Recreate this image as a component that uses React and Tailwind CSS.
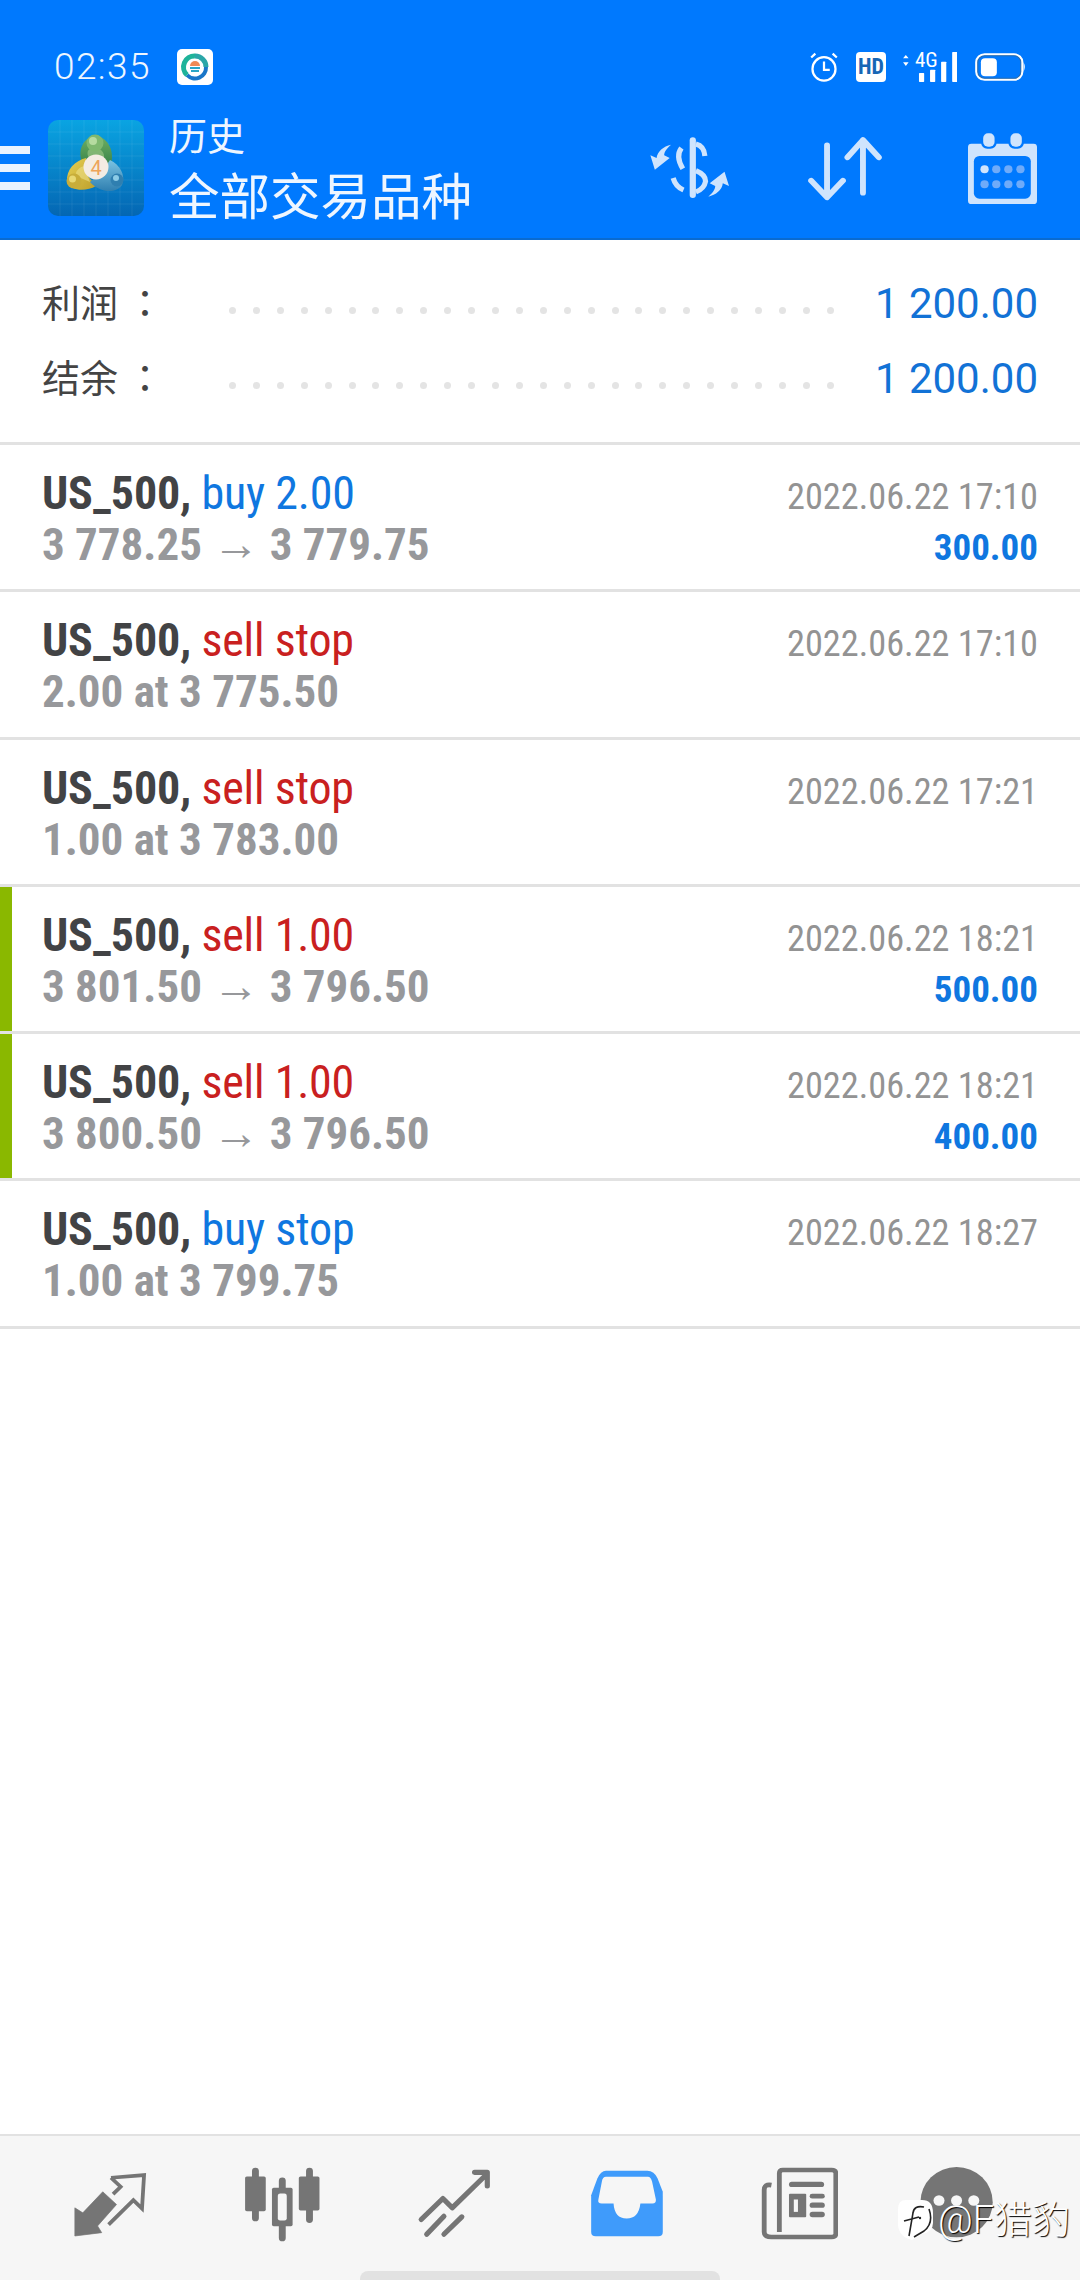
import React from 'react';

const cond = "font-['Roboto','Liberation_Sans',sans-serif] [font-stretch:75%]";

const trades = [
    { title: 'buy 2.00', tone: 'text-[#0f77e0]', sub: ['3 778.25', '3 779.75'], date: '2022.06.22 17:10', profit: '300.00' },
    { title: 'sell stop', tone: 'text-[#c92020]', subText: '2.00 at 3 775.50', date: '2022.06.22 17:10' },
    { title: 'sell stop', tone: 'text-[#c92020]', subText: '1.00 at 3 783.00', date: '2022.06.22 17:21' },
    { title: 'sell 1.00', tone: 'text-[#c92020]', sub: ['3 801.50', '3 796.50'], date: '2022.06.22 18:21', profit: '500.00', mark: true },
    { title: 'sell 1.00', tone: 'text-[#c92020]', sub: ['3 800.50', '3 796.50'], date: '2022.06.22 18:21', profit: '400.00', mark: true },
    { title: 'buy stop', tone: 'text-[#0f77e0]', subText: '1.00 at 3 799.75', date: '2022.06.22 18:27' },
];

const StatusIcons = () => (
    <div className="flex items-center">
        <svg width="32" height="32" viewBox="775 150 100 98" preserveAspectRatio="none">
            <circle cx="825" cy="205" r="36" fill="none" stroke="#fff" strokeWidth="7" />
            <path d="M825 182V208H843" fill="none" stroke="#fff" strokeWidth="7" />
            <path d="M785 170L798 158M865 170L852 158" stroke="#fff" strokeWidth="7" />
        </svg>
        <div className="w-[30px] h-[30px] ml-[16px] bg-white rounded-[4px] flex items-center justify-center text-[#1766b5] text-[22px] font-bold leading-none font-['Roboto',sans-serif] [font-stretch:75%]">
            HD
        </div>
        <div className="relative w-[56px] h-[30px] ml-[15px]">
            <svg width="56" height="30" viewBox="1048 153 162 90" preserveAspectRatio="none" className="block">
                <path d="M1054 172L1062 162L1070 172ZM1054 184L1062 195L1070 184Z" fill="#fff" />
                <rect x="1100" y="216" width="15" height="27" rx="2" fill="#fff" />
                <rect x="1132" y="206" width="15" height="37" rx="2" fill="#fff" />
                <rect x="1164" y="182" width="15" height="61" rx="2" fill="#fff" />
                <rect x="1196" y="153" width="15" height="90" rx="2" fill="#fff" />
            </svg>
            <span className="absolute left-[14px] top-[-3px] text-white text-[21px] leading-[22px] font-['Roboto',sans-serif] [font-stretch:75%]">4G</span>
        </div>
        <svg width="51" height="28" viewBox="1265 156 147 84" preserveAspectRatio="none" className="ml-[18px]">
            <rect x="1269" y="160" width="132" height="76" rx="24" fill="none" stroke="#fff" strokeWidth="7" />
            <rect x="1273" y="164" width="124" height="68" rx="20" fill="none" stroke="#2d6cab" strokeWidth="3" />
            <rect x="1282" y="172" width="46" height="54" rx="12" fill="#fff" />
            <path d="M1405 184Q1412 198 1405 212Z" fill="#fff" />
        </svg>
    </div>
);

const AppLogo = () => (
    <svg width="96" height="96" viewBox="0 0 96 96" className="shrink-0">
        <defs>
            <linearGradient id="mt" x1="0" y1="0" x2="0" y2="1">
                <stop offset="0" stopColor="#0aa4e2" />
                <stop offset="1" stopColor="#0466b3" />
            </linearGradient>
            <linearGradient id="mtGreen" x1="0" y1="0" x2="0" y2="1">
                <stop offset="0" stopColor="#6fae62" />
                <stop offset="1" stopColor="#2f7d46" />
            </linearGradient>
            <linearGradient id="mtGold" x1="0" y1="0" x2="1" y2="1">
                <stop offset="0" stopColor="#e6cf52" />
                <stop offset="1" stopColor="#bd9f2c" />
            </linearGradient>
            <linearGradient id="mtBlue" x1="0" y1="0" x2="0" y2="1">
                <stop offset="0" stopColor="#7cc3e2" />
                <stop offset="1" stopColor="#2f7fb0" />
            </linearGradient>
        </defs>
        <rect width="96" height="96" rx="10" fill="url(#mt)" />
        <path d="M12 0V96M24 0V96M36 0V96M48 0V96M60 0V96M72 0V96M84 0V96M0 12H96M0 24H96M0 36H96M0 48H96M0 60H96M0 72H96M0 84H96" stroke="#ffffff" strokeOpacity="0.07" strokeWidth="1" />
        <path d="M34 42C29 30 36 17 47 16C58 16 67 29 63 44L56 50H40Z" fill="url(#mtGreen)" />
        <path d="M40 36C38 30 42 28 47 28C52 28 57 32 56 38L50 42Z" fill="#a9d08e" fillOpacity="0.55" />
        <circle cx="47" cy="23" r="8.5" fill="#7fb86f" />
        <circle cx="45" cy="21" r="4" fill="#b6dba0" />
        <path d="M38 38C27 41 18 49 19 62C22 71 38 72 48 66L40 56Z" fill="url(#mtGold)" />
        <path d="M36 46C30 48 27 52 28 56L42 62Z" fill="#f1e38e" fillOpacity="0.55" />
        <circle cx="26" cy="61" r="7.5" fill="#c8ad3a" />
        <circle cx="24.5" cy="59" r="3.5" fill="#e8d873" />
        <path d="M62 40C72 45 78 55 74 65C68 74 52 73 42 62L54 52Z" fill="url(#mtBlue)" />
        <circle cx="69" cy="60" r="6.5" fill="#2f7fb0" />
        <circle cx="68" cy="58" r="3" fill="#8ccbe6" />
        <circle cx="48" cy="47" r="12.5" fill="#f4ece3" />
        <text x="48" y="54.5" textAnchor="middle" fontSize="20" fill="#eda45a" fontFamily="Roboto, sans-serif">4</text>
    </svg>
);

const DollarIcon = () => (
    <svg width="80" height="68" viewBox="318 398 232 204" preserveAspectRatio="none">
        <rect x="436" y="408" width="18" height="182" rx="9" fill="#cfe4fd" />
        <g fill="none" stroke="#cfe4fd" strokeWidth="15">
            <path d="M454 428Q478 434 480 464" />
            <path d="M412 440Q394 465 416 502" />
            <path d="M454 508Q482 520 482 540Q478 562 454 572" />
            <path d="M388 530Q395 556 418 566" />
        </g>
        <path d="M382 430C365 445 362 455 362 462L378 470L335 505L322 462L340 470C342 450 360 435 382 430Z" fill="#cfe4fd" />
        <path d="M490 586C507 571 510 561 510 554L494 546L537 511L550 554L532 546C530 566 512 581 490 586Z" fill="#cfe4fd" />
    </svg>
);

const SortIcon = () => (
    <svg width="76" height="68" viewBox="778 398 220 204" preserveAspectRatio="none">
        <path d="M836 432V588M790 538L836 588L882 538M940 574V416M895 468L940 416L986 468" fill="none" stroke="#cfe4fd" strokeWidth="17" strokeLinecap="round" strokeLinejoin="round" />
    </svg>
);

const CalendarIcon = () => (
    <svg width="69" height="72" viewBox="1243 390 200 216" preserveAspectRatio="none">
        <rect x="1243" y="425" width="200" height="181" rx="10" fill="#cfe4fd" />
        <rect x="1260" y="462" width="165" height="128" rx="16" fill="#0079fe" />
        <rect x="1281" y="388" width="45" height="52" rx="18" fill="#0079fe" />
        <rect x="1360" y="388" width="45" height="52" rx="18" fill="#0079fe" />
        <rect x="1287" y="394" width="33" height="40" rx="14" fill="#cfe4fd" />
        <rect x="1366" y="394" width="33" height="40" rx="14" fill="#cfe4fd" />
        <circle cx="1291" cy="502" r="12" fill="#cfe4fd" />
        {[1325, 1360, 1395].map((x) => <circle key={x} cx={x} cy="502" r="12" fill="#6fabf9" />)}
        {[1291, 1325, 1360, 1395].map((x) => <circle key={x} cx={x} cy="547" r="12" fill="#6fabf9" />)}
    </svg>
);

const NavIcon = ({ left, width, children }) => (
    <svg width={width / 2.904} height="77" viewBox={`${left} 140 ${width} 230`} preserveAspectRatio="none">
        {children}
    </svg>
);

const BottomNav = () => (
    <div className="h-[146px] bg-[#f6f6f6] border-t-[2px] border-[#e2e2e2] flex flex-col">
        <div className="h-[135px] px-[24px] flex items-center">
            <div className="flex-1 flex justify-center">
                <NavIcon left={200} width={240}>
                    <path d="M322 178L418 170L412 270L387 245L315 318M322 178L350 205L328 227" fill="none" stroke="#757575" strokeWidth="11" />
                    <path d="M298 220L338 258L283 322L295 342L217 352V268L240 283Z" fill="#757575" stroke="#757575" strokeWidth="2" strokeLinejoin="round" />
                </NavIcon>
            </div>
            <div className="flex-1 flex justify-center">
                <NavIcon left={700} width={235}>
                    <rect x="729" y="148" width="20" height="160" rx="10" fill="#757575" />
                    <rect x="709" y="174" width="60" height="104" rx="5" fill="#757575" />
                    <rect x="807" y="177" width="20" height="191" rx="10" fill="#757575" />
                    <rect x="787" y="208" width="60" height="115" rx="5" fill="#757575" />
                    <rect x="804" y="225" width="26" height="81" rx="7" fill="#f6f6f6" />
                    <rect x="886" y="148" width="20" height="165" rx="10" fill="#757575" />
                    <rect x="865" y="174" width="60" height="102" rx="5" fill="#757575" />
                </NavIcon>
            </div>
            <div className="flex-1 flex justify-center">
                <NavIcon left={1202} width={225}>
                    <path d="M1220 303L1283 240L1310 268L1408 170M1375 162H1412V203M1236 347L1286 293M1286 347L1338 295" fill="none" stroke="#757575" strokeWidth="15" strokeLinecap="round" strokeLinejoin="round" />
                </NavIcon>
            </div>
            <div className="flex-1 flex justify-center">
                <NavIcon left={132} width={230}>
                    <path d="M190 157H310Q330 157 340 180L355 220V340Q355 353 342 353H160Q147 353 147 340V230L165 180Q175 157 190 157Z" fill="#3f9bfb" />
                    <path d="M190 175H312Q320 175 324 190L335 243Q336 255 325 255H290Q285 300 250 300Q215 300 212 255H178Q165 255 168 243L178 190Q180 175 190 175Z" fill="#f6f6f6" />
                </NavIcon>
            </div>
            <div className="flex-1 flex justify-center">
                <NavIcon left={636} width={234}>
                    <path d="M675 200Q654 196 654 215V340Q654 355 675 355H850Q862 355 862 345V165Q862 155 850 155H708Q698 155 698 165V340" fill="none" stroke="#757575" strokeWidth="14" />
                    <rect x="726" y="190" width="102" height="16" rx="8" fill="#757575" />
                    <rect x="726" y="226" width="50" height="70" rx="3" fill="#757575" />
                    <rect x="740" y="243" width="12" height="37" fill="#f6f6f6" />
                    <rect x="786" y="226" width="44" height="14" rx="7" fill="#757575" />
                    <rect x="786" y="252" width="44" height="16" rx="8" fill="#757575" />
                    <rect x="786" y="280" width="44" height="16" rx="8" fill="#757575" />
                </NavIcon>
            </div>
            <div className="flex-1 flex justify-center">
                <NavIcon left={1100} width={300}>
                    <circle cx="1212" cy="251" r="105" fill="#757575" />
                    <circle cx="1161" cy="246" r="16" fill="#f6f6f6" />
                    <circle cx="1212" cy="246" r="16" fill="#f6f6f6" />
                    <circle cx="1262" cy="246" r="16" fill="#f6f6f6" />
                </NavIcon>
            </div>
        </div>
        <div className="w-[360px] h-[9px] mx-auto bg-[#e2e2e2] rounded-t-[8px]" />
    </div>
);

const Watermark = () => (
    <div className="absolute left-[897px] top-[2198px] flex items-center">
        <svg width="36" height="42" viewBox="0 0 36 42">
            <path d="M9 1H25Q36 1 36 14V24Q36 33 25 35L15 41Q2 38 1 26V10Q1 1 9 1Z" fill="#ffffff" />
            <path d="M27 8Q17 6 16 14L12 37M7 22L22 18" fill="none" stroke="#222" strokeWidth="1.6" />
            <path d="M32 10Q37 24 27 32L17 38" fill="none" stroke="#222" strokeWidth="1.6" />
            <circle cx="23" cy="19" r="1.2" fill="#222" />
        </svg>
        <span className="ml-[5px] text-white text-[38px] font-light leading-[44px] font-['Roboto','Noto_Sans_CJK_SC',sans-serif] [text-shadow:1px_1px_1px_#000]">
            @F猎豹
        </span>
    </div>
);

const TradeRow = ({ trade }) => (
    <div className="h-[147.3px] flex border-b-[3px] border-[#e2e2e2]">
        <div className={`w-[12px] shrink-0 ${trade.mark ? 'bg-[#8ab800]' : ''}`} />
        <div className={`flex-1 pl-[30px] pr-[42px] flex justify-between ${cond}`}>
            <div className="pt-[24px]">
                <div className="text-[46px] leading-[48px] tracking-[-0.2px] whitespace-nowrap">
                    <span className="font-bold text-[#424345]">US_500, </span>
                    <span className={trade.tone}>{trade.title}</span>
                </div>
                <div className="mt-[4px] text-[45px] leading-[48px] font-bold text-[#97989b] whitespace-nowrap">
                    {trade.sub ? (
                        <>
                            {trade.sub[0]} <span className="font-normal text-[47px] leading-[40px]">→</span> {trade.sub[1]}
                        </>
                    ) : trade.subText}
                </div>
            </div>
            <div className="pt-[29px] text-right">
                <div className="text-[36.3px] leading-[46px] text-[#939393] whitespace-nowrap">{trade.date}</div>
                {trade.profit && <div className="mt-[6px] text-[37px] leading-[44px] font-bold text-[#0f77e0]">{trade.profit}</div>}
            </div>
        </div>
    </div>
);

const SummaryRow = ({ label, value }) => (
    <div className="flex items-center h-[75px]">
        <div className="w-[187px] shrink-0 flex items-center text-[38px] text-[#444] leading-[50px] mt-[-5px]">
            <span className="font-['Noto_Sans_CJK_SC',sans-serif]">{label}</span>
            <span className="ml-[8px] font-['Noto_Sans_CJK_TC',sans-serif]">：</span>
        </div>
        <div className="w-[605px] shrink-0 flex justify-between mt-[14px]">
            {Array.from({ length: 26 }).map((_, i) => (
                <div key={i} className="w-[7px] h-[7px] rounded-full bg-[#e4e4e4]" />
            ))}
        </div>
        <span className="ml-auto text-[42px] text-[#1272d6] font-['Roboto',sans-serif] leading-[50px]">{value}</span>
    </div>
);

export default function App() {
    return (
        <div className="relative w-[1080px] h-[2280px] bg-white flex flex-col overflow-hidden">
            <div className="bg-[#0079fe] border-b-[2px] border-[#0a6bd0] h-[240px] text-white">
                <div className="h-[112px] pt-[22px] pl-[54px] pr-[54px] flex items-center justify-between">
                    <div className="flex items-center">
                        <span className="text-[37px] [font-weight:350] tracking-[1.4px] text-[#eef6ff] font-['Roboto',sans-serif]">02:35</span>
                        <div className="ml-[26px] w-[36px] h-[36px] rounded-[5px] bg-white flex items-center justify-center">
                            <svg width="30" height="30" viewBox="0 0 30 30">
                                <path d="M15 4A11 11 0 0 1 26 15" fill="none" stroke="#2ba6a8" strokeWidth="5" />
                                <path d="M26 15A11 11 0 0 1 7 23" fill="none" stroke="#1976c8" strokeWidth="4" />
                                <path d="M7 23A11 11 0 0 1 15 4" fill="none" stroke="#1eb39a" strokeWidth="5" />
                                <path d="M10 14A5 5 0 0 1 20 14Z" fill="#ef8a55" />
                                <path d="M10 16H20M11 19H19" stroke="#2aa6c6" strokeWidth="2" />
                            </svg>
                        </div>
                    </div>
                    <StatusIcons />
                </div>
                <div className="h-[126px] pb-[14px] flex items-center">
                    <div className="w-[30px] shrink-0 flex flex-col gap-[10px]">
                        <div className="h-[8px] bg-[#e9f3ff]" />
                        <div className="h-[8px] bg-[#e9f3ff]" />
                        <div className="h-[8px] bg-[#e9f3ff]" />
                    </div>
                    <div className="ml-[18px]"><AppLogo /></div>
                    <div className="ml-[25px] mt-[-4px] text-[#eef6ff] font-['Noto_Sans_CJK_SC',sans-serif] whitespace-nowrap">
                        <div className="text-[38px] leading-[40px]">历史</div>
                        <div className="mt-[14px] text-[50.5px] leading-[50px]">全部交易品种</div>
                    </div>
                    <div className="ml-auto pr-[43px] flex items-center">
                        <DollarIcon />
                        <div className="ml-[78px]"><SortIcon /></div>
                        <div className="ml-[85px]"><CalendarIcon /></div>
                    </div>
                </div>
            </div>

            <div className="h-[205px] px-[42px] pt-[26px] border-b-[3px] border-[#e2e2e2]">
                <SummaryRow label="利润" value="1 200.00" />
                <SummaryRow label="结余" value="1 200.00" />
            </div>

            {trades.map((trade, i) => <TradeRow key={i} trade={trade} />)}

            <div className="flex-1" />
            <BottomNav />
            <Watermark />
        </div>
    );
}
